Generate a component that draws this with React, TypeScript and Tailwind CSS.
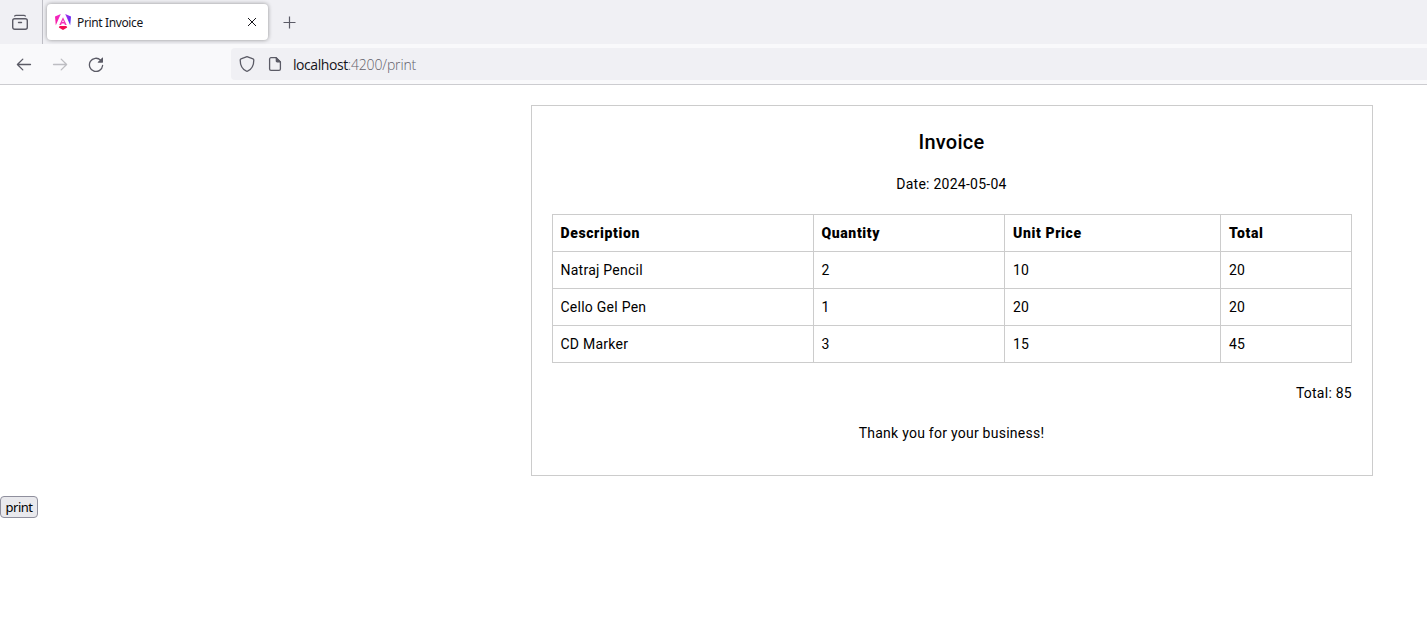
import React from 'react';

const items = [
  { name: 'Natraj Pencil', quantity: 2, price: 10, total: 20 },
  { name: 'Cello Gel Pen', quantity: 1, price: 20, total: 20 },
  { name: 'CD Marker', quantity: 3, price: 15, total: 45 },
];

function ArchiveIcon() {
  return (
    <svg className="size-4" viewBox="0 0 16 16" fill="none" stroke="#5b5b66" strokeWidth="1.4" strokeLinecap="round">
      <path d="M2.700 2C3 1.500 3.600 1.400 4.200 1.400h7.600c.6 0 1.200.1 1.500.6" />
      <rect x=".7" y="4.700" width="14.600" height="10.600" rx="2" />
      <path d="M6.500 8.500h3" />
    </svg>
  );
}

function AngularLogo() {
  return (
    <svg className="h-4 w-4" viewBox="0 0 16 16">
      <defs>
        <linearGradient id="right" x1="0" y1="0" x2="1" y2=".6">
          <stop offset="0" stopColor="#b52be8" />
          <stop offset="1" stopColor="#5c2cf5" />
        </linearGradient>
        <linearGradient id="left" x1="0" y1="1" x2="1" y2="0">
          <stop offset="0" stopColor="#fa1c9a" />
          <stop offset="1" stopColor="#ee2bd6" />
        </linearGradient>
      </defs>
      <path fill="url(#left)" d="M5.800 0 .8 11.200 0 2.600z" />
      <path fill="url(#right)" d="M10.200 0 16 2.600l-.8 8.600z" />
      <path fill="#f40a55" d="M12.200 13.500 8 16l-4.200-2.500.8-1.400h6.800z" />
      <path fill="#f431b9" fillRule="evenodd" d="M8 3.200 11.700 11H9.900L9.300 9.400H6.700L6.100 11H4.300zM8 5.900 7.100 8h1.800z" />
    </svg>
  );
}

function BackIcon() {
  return (
    <svg className="size-4" viewBox="0 0 16 16" fill="none" stroke="currentColor" strokeWidth="1.3" strokeLinecap="round" strokeLinejoin="round">
      <path d="M14.500 8.500H1.500M6.800 3.100 1.400 8.500l5.400 5.400" />
    </svg>
  );
}

function ForwardIcon() {
  return (
    <svg className="size-4" viewBox="0 0 16 16" fill="none" stroke="currentColor" strokeWidth="1.3" strokeLinecap="round" strokeLinejoin="round">
      <path d="M1.500 8.500h13M9.200 3.100l5.400 5.400-5.400 5.400" />
    </svg>
  );
}

function ReloadIcon() {
  return (
    <svg className="size-4" viewBox="0 0 16 16" fill="none">
      <path d="M12.600 4.100A6.600 6.600 0 1 0 14.600 9.500" stroke="#5b5b66" strokeWidth="1.3" strokeLinecap="round" />
      <path d="M15 2v4.300c0 .3-.2.5-.5.5h-4.300c-.4 0-.6-.5-.3-.8l4.300-4.300c.3-.3.8-.1.800.3z" fill="#5b5b66" />
    </svg>
  );
}

function ShieldIcon() {
  return (
    <svg className="size-4" viewBox="0 0 16 16" fill="none" stroke="#5b5b66" strokeWidth="1.3" strokeLinejoin="round">
      <path d="M8 .7 14 2.900c.5.2.800.6.800 1.100 0 4.900-1.700 9.200-6.300 11.200-.3.1-.7.1-1 0C2.900 13.200 1.200 8.900 1.200 4c0-.5.3-.9.8-1.100z" />
    </svg>
  );
}

function PageIcon() {
  return (
    <svg className="size-4" viewBox="0 0 16 16" fill="none">
      <path d="M9 1.700H4A1.400 1.400 0 0 0 2.600 3.100v9.900A1.400 1.400 0 0 0 4 14.400h8a1.400 1.400 0 0 0 1.400-1.400V6z" stroke="#5b5b66" strokeWidth="1.3" strokeLinejoin="round" />
      <path d="M8.700 1.100v3.900c0 .8.6 1.400 1.400 1.400H14v-.6L9.300 1.100z" fill="#5b5b66" />
    </svg>
  );
}

function TabBar() {
  return (
    <div className="flex h-11 bg-[#f0f0f4]">
      <div className="flex w-[43px] items-center border-r border-[#bebec5] pl-3">
        <ArchiveIcon />
      </div>
      <div className="mt-1 ml-[4px] flex h-9 w-[221px] items-center rounded bg-white pr-[11px] pl-2 shadow-[0_0_4px_rgba(0,0,0,0.4)]">
        <AngularLogo />
        <span className="ml-[6px] w-[160px] pt-[2px] font-['Noto_Sans','Open_Sans',sans-serif] text-xs tracking-[-0.37px] whitespace-nowrap text-[#15141a]">
          Print Invoice
        </span>
        <svg className="ml-auto size-[10px]" viewBox="0 0 10 10" stroke="#15141a" strokeWidth="1">
          <path d="m1 1 8 8M9 1 1 9" />
        </svg>
      </div>
      <svg className="mt-4 ml-[15px] size-[13px]" viewBox="0 0 13 13" stroke="#5b5b66" strokeWidth="1.2">
        <path d="M6.500.5v12M.5 6.500h12" />
      </svg>
    </div>
  );
}

function NavBar() {
  return (
    <div className="flex h-[41px] items-center border-b border-[#ccccd0] bg-[#f9f9fb] pl-4">
      <div className="flex w-[215px] gap-5 text-[#5b5b66]">
        <BackIcon />
        <span className="text-[#bdbdc2]">
          <ForwardIcon />
        </span>
        <ReloadIcon />
      </div>
      <div className="flex h-8 flex-1 items-center rounded-l bg-[#f0f0f4] pl-2">
        <ShieldIcon />
        <span className="ml-3">
          <PageIcon />
        </span>
        <span className="ml-[10px] pt-[2px] font-['Open_Sans',sans-serif] text-[14px] leading-5 font-light tracking-[-0.14px] text-[#62616a]">
          <span className="font-normal tracking-[-0.44px] text-[#15141a]">localhost</span>:4200/print
        </span>
      </div>
    </div>
  );
}

function Invoice() {
  const cell = 'h-[37px] border border-[#ccc] px-2 py-0 text-left first:pl-[7.5px] nth-2:pl-[7.5px]';
  const heading = `${cell} font-black tracking-[0.62px]`;
  return (
    <section className="ml-[531px] w-[842px] border border-[#ccc] p-5 font-[Roboto,sans-serif] text-sm leading-5 tracking-[0.25px] text-black">
      <header className="mb-5 pr-px text-center">
        <h2 className="mb-4 text-xl leading-8 font-medium tracking-[0.25px]">Invoice</h2>
        <p>Date: 2024-05-04</p>
      </header>
      <table className="w-[800px] table-fixed border-collapse">
        <colgroup>
          <col className="w-[261px]" />
          <col className="w-[191px]" />
          <col className="w-[216px]" />
          <col className="w-[131px]" />
        </colgroup>
        <thead>
          <tr>
            <th className={heading}>Description</th>
            <th className={heading}>Quantity</th>
            <th className={heading}>Unit Price</th>
            <th className={heading}>Total</th>
          </tr>
        </thead>
        <tbody>
          {items.map((item) => (
            <tr key={item.name}>
              <td className={cell}>{item.name}</td>
              <td className={cell}>{item.quantity}</td>
              <td className={cell}>{item.price}</td>
              <td className={cell}>{item.total}</td>
            </tr>
          ))}
        </tbody>
      </table>
      <p className="mt-5 text-right">Total: 85</p>
      <p className="mt-5 mb-3 pr-px text-center">Thank you for your business!</p>
    </section>
  );
}

export default function App() {
  return (
    <div className="min-h-[626px] bg-white">
      <TabBar />
      <NavBar />
      <main className="pt-5">
        <Invoice />
        <button className="mt-5 flex h-[22px] w-[38px] items-center justify-center rounded border border-[#8f8f9d] bg-[#e9e9ed] font-['Noto_Sans','Open_Sans',sans-serif] text-[13px] leading-none tracking-[-0.5px] text-black">
          print
        </button>
      </main>
    </div>
  );
}
